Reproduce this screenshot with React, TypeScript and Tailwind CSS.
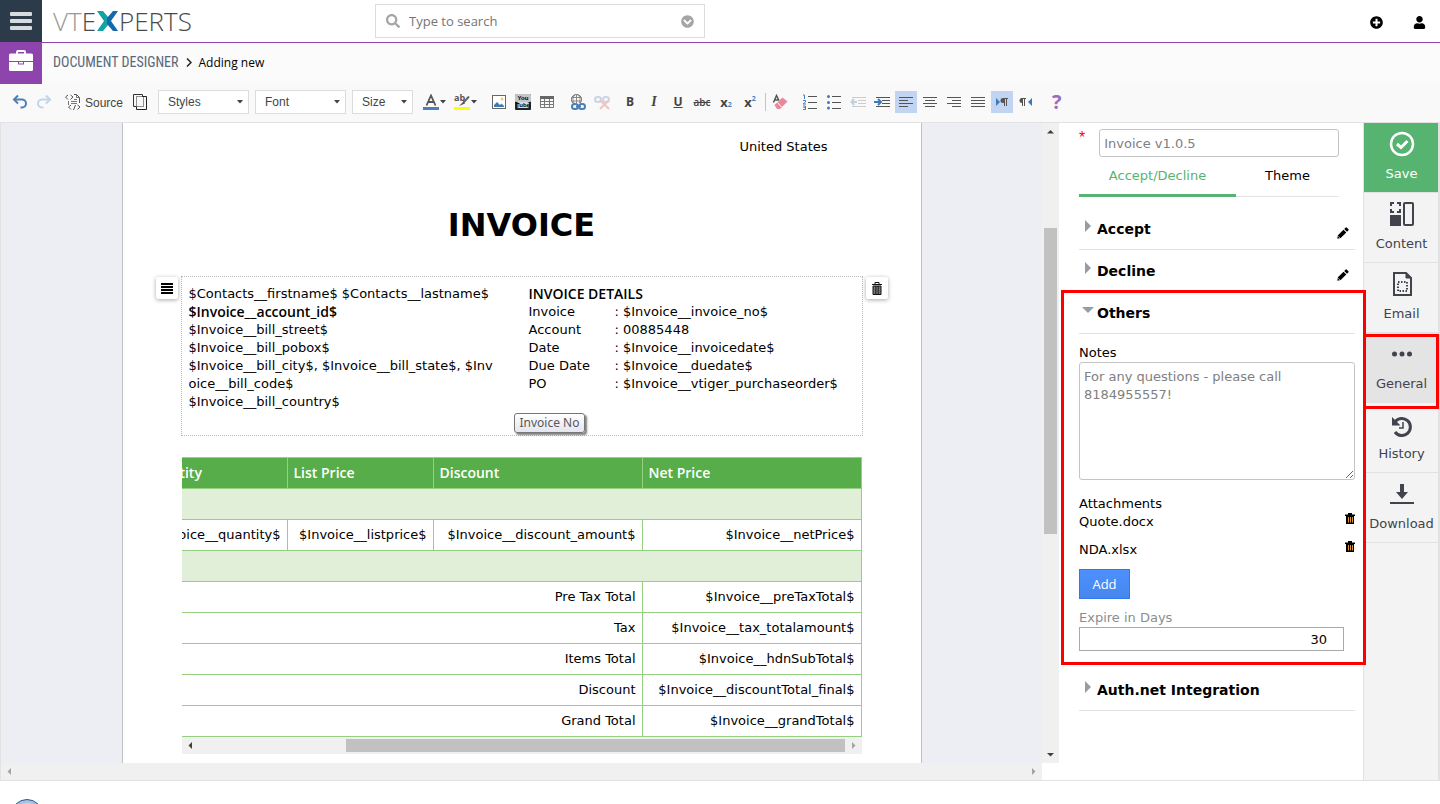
import type { ReactNode } from "react";
import { FaUser, FaSearch, FaPlusCircle, FaChevronCircleDown } from "react-icons/fa";

const fieldText =
  "rounded-[3px] border border-[#c4c4c4] bg-white text-[13px] leading-[18px] text-[#808080]";

/* ---------- toolbar ---------- */

const Caret = () => (
  <svg width="6" height="4" viewBox="0 0 6 4" fill="#444" className="shrink-0">
    <path d="M0 0h6L3 3.5z" />
  </svg>
);

const ToolSelect = ({ label, width }: { label: string; width: string }) => (
  <div className={`relative h-6 ${width}`}>
    <select
      aria-label={label}
      className="h-full w-full appearance-none border border-[#dcdcdc] bg-white pl-[9px] font-['Liberation_Sans'] text-[12px] text-[#444]"
    >
      <option>{label}</option>
    </select>
    <span className="pointer-events-none absolute top-[10px] right-[6px]">
      <Caret />
    </span>
  </div>
);

const Tool = ({
  label,
  active,
  children,
}: {
  label: string;
  active?: boolean;
  children: ReactNode;
}) => (
  <button
    aria-label={label}
    className={`flex h-[22px] w-[22px] items-center justify-center ${active ? "bg-[#c1d4f2]" : ""}`}
  >
    {children}
  </button>
);

const Svg = ({ children }: { children: ReactNode }) => (
  <svg width="16" height="16" viewBox="0 0 16 16" fill="none" className="shrink-0">
    {children}
  </svg>
);

const Lines = ({ rows }: { rows: [number, number][] }) => (
  <Svg>
    {rows.map(([x, w], i) => (
      <rect key={i} x={x} y={3 + i * 3} width={w} height="1" fill="#555" />
    ))}
  </Svg>
);

const Toolbar = () => (
  <div className="flex h-[38px] items-center bg-[#f9f9f9] pb-[2px] pl-[9px]">
    <div className="flex items-center gap-[2px]">
      <Tool label="Undo">
        <Svg>
          <path d="M2 5.5h8a3.5 3.5 0 0 1 0 8H8.5" stroke="#4a7fb8" strokeWidth="2" />
          <path d="M6 1.500L2 5.500l4 4" stroke="#4a7fb8" strokeWidth="2" />
        </Svg>
      </Tool>
      <Tool label="Redo">
        <Svg>
          <path d="M14 5.500H6a3.5 3.5 0 0 0 0 8h1.5" stroke="#c3d4e6" strokeWidth="2" />
          <path d="M10 1.500l4 4-4 4" stroke="#c3d4e6" strokeWidth="2" />
        </Svg>
      </Tool>
    </div>
    <button className="ml-[10px] flex items-center gap-1 font-['Liberation_Sans'] text-[12px] text-[#444]">
      <Svg>
        <path d="M3 1L.5 3 3 5.500M5.500 1L8 3 5.500 5.500M9 .5h2.500l3 3V9" stroke="#555" />
        <path d="M11.500.5v3h3M3.500 7v4M6 7.500h6M9 5.500h3M6 9.500h6" stroke="#777" />
        <path d="M6 11l-2.500 2L6 15.500M12.500 11l2.500 2-2.500 2.500M10.500 11l-2 5" stroke="#555" />
      </Svg>
      <span className="pt-px">Source</span>
    </button>
    <button aria-label="Show blocks" className="ml-[9px]">
      <Svg>
        <path d="M5 .5H1.500v12H4.500M4 .5h6.500V3" stroke="#333" />
        <path d="M11 2.500h3.500v13h-10V13" stroke="#222" />
        <path d="M4.500 2.500h7v10h-7z" stroke="#222" strokeDasharray="1 1" />
      </Svg>
    </button>
    <div className="ml-[10px] flex gap-[6px]">
      <ToolSelect label="Styles" width="w-[91px]" />
      <ToolSelect label="Font" width="w-[91px]" />
      <ToolSelect label="Size" width="w-[61px]" />
    </div>
    <div className="ml-[10px] flex items-center gap-2">
      <button aria-label="Text color" className="flex items-center gap-px">
        <Svg>
          <path d="M3.500 11.500L8 1.500 12.500 11.500M5 8h6" stroke="#555" strokeWidth="1.800" />
          <rect y="13" width="16" height="3" fill="#4a7fb8" />
        </Svg>
        <Caret />
      </button>
      <button aria-label="Background color" className="flex items-center gap-px">
        <svg width="16" height="18" viewBox="0 -1 16 18" fill="none">
          <text x="0" y="7" fontSize="9" fontWeight="bold" fontFamily="Open Sans" fill="#555">
            ab
          </text>
          <path d="M15 2.500L9.500 8.500" stroke="#666" strokeWidth="2" />
          <path d="M9.500 7.500l1.500 2-6 2.500z" fill="#555" />
          <rect y="13" width="16" height="3" fill="#ff0" />
        </svg>
        <Caret />
      </button>
    </div>
    <div className="ml-[11px] flex items-center gap-[2px]">
      <Tool label="Image">
        <Svg>
          <rect x="1.500" y="1.500" width="13" height="13" fill="#fff" stroke="#666" />
          <circle cx="11" cy="5" r="1.500" fill="#f0c878" />
          <path d="M3 13V11l3-3 3 3 1.500-1.500L13 12v1z" fill="#3f7ab8" />
        </Svg>
      </Tool>
      <Tool label="Embed YouTube video">
        <svg width="16" height="16" viewBox="0 0 16 16">
          <rect width="16" height="16" rx="1" fill="#222" />
          <rect width="16" height="8" rx="1" fill="#c4c4c4" />
          <rect x="2" y="8" width="12" height="6" rx="2" fill="#ddd" />
          <g fontFamily="Liberation Sans" fontSize="6" fontWeight="bold" textAnchor="middle">
            <text x="8" y="6">You</text>
            <text x="8" y="13">Tube</text>
          </g>
        </svg>
      </Tool>
      <Tool label="Table">
        <Svg>
          <path d="M1.500 2.500h13v11h-13zM1.500 7.500h13M1.500 10.500h13M5.500 5v9M10.500 5v9" stroke="#777" />
          <rect x="1" y="2" width="14" height="3" fill="#666" />
        </Svg>
      </Tool>
    </div>
    <div className="ml-[9px] flex items-center gap-[2px]">
      <Tool label="Link">
        <Svg>
          <circle cx="6.500" cy="5.500" r="5" stroke="#666" />
          <path d="M6.500.5v9M1.500 3.500h10M1.500 7h10M4.500 1c-2 3-2 6 0 9M8.500 1c2 3 2 6 0 9" stroke="#888" />
          <rect x="1" y="9" width="15" height="7" rx="3" fill="#f9f9f9" />
          <rect x="2" y="10" width="6" height="5" rx="2.500" stroke="#4a7fb8" strokeWidth="2" />
          <rect x="9" y="10" width="6" height="5" rx="2.500" stroke="#4a7fb8" strokeWidth="2" />
          <path d="M6 12.500h5" stroke="#4a7fb8" strokeWidth="2" />
        </Svg>
      </Tool>
      <Tool label="Unlink">
        <Svg>
          <rect x="1" y="3" width="6" height="5" rx="2.500" stroke="#c8d6e6" strokeWidth="2" />
          <rect x="9" y="3" width="6" height="5" rx="2.500" stroke="#c8d6e6" strokeWidth="2" />
          <path d="M6 6l9 9M15 6l-9 9" stroke="#f3c3bd" strokeWidth="2" />
        </Svg>
      </Tool>
    </div>
    <div className="ml-[6px] flex items-center gap-[2px] font-['Open_Sans'] text-[12px] leading-4 text-[#444]">
      <Tool label="Bold"><b>B</b></Tool>
      <Tool label="Italic">
        <i className="font-['Liberation_Serif'] text-[14px] font-bold">I</i>
      </Tool>
      <Tool label="Underline"><b className="underline">U</b></Tool>
      <Tool label="Strikethrough">
        <span className="text-[10px] font-semibold line-through">abc</span>
      </Tool>
      <Tool label="Subscript">
        <b className="text-[13px]">x</b>
        <b className="self-end text-[7px] text-[#4a7fb8]">2</b>
      </Tool>
      <Tool label="Superscript">
        <b className="text-[13px]">x</b>
        <b className="self-start text-[7px] text-[#4a7fb8]">2</b>
      </Tool>
    </div>
    <span className="ml-1 h-[18px] w-px bg-[#c4c4c4]" />
    <div className="ml-[3px] flex">
      <Tool label="Remove format">
        <Svg>
          <path d="M1.500 8.500L4.500 1.500 7 6.500M2.500 6h4" stroke="#555" strokeWidth="1.500" />
          <path d="M2.500 11l8-7.500 5 4-7.500 7.500H5z" fill="#e8899b" />
          <path d="M5.500 8.500l4 4.500" stroke="#fff" />
        </Svg>
      </Tool>
    </div>
    <div className="ml-2 flex items-center gap-[2px]">
      <Tool label="Numbered list">
        <Svg>
          <path d="M6 2.500h9M6 8.500h9M6 14.500h9" stroke="#555" />
          <path d="M1 1h1.500v4M1 6.500h2.500V8L1 10h3M1 12h2.500v3.500H1M1.500 13.500h2" stroke="#4a7fb8" />
        </Svg>
      </Tool>
      <Tool label="Bulleted list">
        <Svg>
          <path d="M6 2.500h9M6 8.500h9M6 14.500h9" stroke="#555" />
          <g fill="#3f7ab8">
            <circle cx="2.500" cy="2.500" r="1.500" />
            <circle cx="2.500" cy="8.500" r="1.500" />
            <circle cx="2.500" cy="14" r="1.500" />
          </g>
        </Svg>
      </Tool>
      <Tool label="Decrease indent">
        <Svg>
          <path d="M2 3.500h14M8 6.500h8M8 9.500h8M2 12.500h14" stroke="#ccc" />
          <path d="M4 5L1.500 8 4 11M1.500 8H7" stroke="#bdd2e6" strokeWidth="2" />
        </Svg>
      </Tool>
      <Tool label="Increase indent">
        <Svg>
          <path d="M2 3.500h14M8 6.500h8M8 9.500h8M2 12.500h14" stroke="#555" />
          <path d="M4 5l3 3-3 3M0 8h6" stroke="#3f7ab8" strokeWidth="2" />
        </Svg>
      </Tool>
      <Tool label="Align left" active>
        <Lines rows={[[1, 14], [1, 9], [1, 14], [1, 9]]} />
      </Tool>
      <Tool label="Center">
        <Lines rows={[[1, 14], [3, 10], [1, 14], [3, 10]]} />
      </Tool>
      <Tool label="Align right">
        <Lines rows={[[1, 14], [6, 9], [1, 14], [6, 9]]} />
      </Tool>
      <Tool label="Justify">
        <Lines rows={[[1, 14], [1, 14], [1, 14], [1, 14]]} />
      </Tool>
      <Tool label="Left to right" active>
        <Svg>
          <path d="M2 4l4 4-4 4z" fill="#3f7ab8" />
          <path d="M12.500 4v8M10.500 4v8M14 4.500H9" stroke="#555" />
          <path d="M11 4H9a2.500 2.500 0 0 0 0 5h2z" fill="#555" />
        </Svg>
      </Tool>
      <Tool label="Right to left">
        <Svg>
          <path d="M14 4l-4 4 4 4z" fill="#3f7ab8" />
          <path d="M6.500 4v8M4.500 4v8M8 4.500H3" stroke="#555" />
          <path d="M5 4H4a2.500 2.500 0 0 0 0 5h1z" fill="#555" />
        </Svg>
      </Tool>
    </div>
    <button className="ml-[15px] font-['Open_Sans'] text-[20px] leading-5 font-bold text-[#9b6cc0]">
      ?
    </button>
  </div>
);

/* ---------- header ---------- */

const Logo = () => (
  <div className="flex items-center font-['Open_Sans'] text-[26px] leading-[42px] text-[#4a4a4a]">
    <span className="font-light text-[#999]">VT</span>
    <span className="font-light">E</span>
    <svg width="23" height="20" viewBox="0 0 23 20">
      <path d="M1 0h6l5 6v8l-5 6H1l7-10z" fill="#14a3a3" />
      <path d="M22 0h-5l-6 7v6l6 7h5l-7-10z" fill="#1668ae" />
    </svg>
    <span className="font-light">PERTS</span>
  </div>
);

const Header = () => (
  <header className="flex">
    <div className="w-[42px] shrink-0">
      <button aria-label="Menu" className="flex h-[42px] w-full items-center justify-center bg-[#2c3b49]">
        <svg width="22" height="18" viewBox="0 0 22 18" fill="#d9dcdf">
          <rect width="22" height="4" rx="1" />
          <rect y="7" width="22" height="4" rx="1" />
          <rect y="14" width="22" height="4" rx="1" />
        </svg>
      </button>
      <div className="flex h-[42px] justify-center bg-[#8e44ad] pt-2">
        <svg width="24" height="21" viewBox="0 0 24 21" fill="#fff">
          <path d="M7 4V2a2 2 0 0 1 2-2h6a2 2 0 0 1 2 2v2h-2V2H9v2z" />
          <path d="M1.500 3.500h21A1.500 1.500 0 0 1 24 5v6H0V5a1.500 1.500 0 0 1 1.500-1.500z" />
          <path d="M0 12h9v2.500h6V12h9v7.500a1.500 1.500 0 0 1-1.500 1.500h-21A1.500 1.500 0 0 1 0 19.500z" />
          <path d="M10 12h4v1.500h-4z" />
        </svg>
      </div>
    </div>
    <div className="flex-1">
      <div className="flex h-[43px] items-center border-b border-[#8e44ad] pl-[11px]">
        <div className="w-[322px]">
          <Logo />
        </div>
        <label className="flex h-[34px] w-[330px] items-center border border-[#dcdcdc] px-[10px]">
          <FaSearch className="text-[14px] text-[#a5a5a5]" />
          <input
            placeholder="Type to search"
            aria-label="Type to search"
            className="ml-[9px] min-w-0 flex-1 pt-[2px] font-['Open_Sans'] text-[13px] outline-none placeholder:text-[#757575]"
          />
          <FaChevronCircleDown className="text-[13px] text-[#a5a5a5]" />
        </label>
        <div className="ml-auto flex gap-[30px] pt-[3px] pr-[14px] text-[13px] text-black">
          <button aria-label="Quick create"><FaPlusCircle /></button>
          <button aria-label="Account"><FaUser /></button>
        </div>
      </div>
      <nav className="flex h-[41px] items-center gap-[7px] bg-[#fbfbfb] pb-[2px] pl-[11px] font-['Open_Sans'] text-[12px] text-black">
        <a href="#" className="font-['Roboto_Condensed','Liberation_Sans_Narrow'] text-[14px] text-[#596779]">
          DOCUMENT DESIGNER
        </a>
        <svg width="6" height="9" viewBox="0 0 6 9" fill="none" stroke="#222" strokeWidth="1.500">
          <path d="M1 .5l4 4-4 4" />
        </svg>
        <span>Adding new</span>
      </nav>
    </div>
  </header>
);

/* ---------- document ---------- */

const Arrow = ({ d, fill = "#404040" }: { d: string; fill?: string }) => (
  <svg width="17" height="17" viewBox="0 0 17 17" fill={fill} className="shrink-0">
    <path d={d} />
  </svg>
);

const up = "M5 10.500h7L8.500 7z";
const down = "M5 7h7l-3.500 3.500z";
const left = "M10 5v7L6.500 8.500z";
const right = "M7 5v7l3.500-3.500z";

const address = [
  "$Invoice__bill_street$",
  "$Invoice__bill_pobox$",
  "$Invoice__bill_city$, $Invoice__bill_state$, $Invoice__bill_code$",
  "$Invoice__bill_country$",
];

const details = [
  ["Invoice", "$Invoice__invoice_no$"],
  ["Account", "00885448"],
  ["Date", "$Invoice__invoicedate$"],
  ["Due Date", "$Invoice__duedate$"],
  ["PO", "$Invoice__vtiger_purchaseorder$"],
];

const totals = [
  ["Pre Tax Total", "$Invoice__preTaxTotal$"],
  ["Tax", "$Invoice__tax_totalamount$"],
  ["Items Total", "$Invoice__hdnSubTotal$"],
  ["Discount", "$Invoice__discountTotal_final$"],
  ["Grand Total", "$Invoice__grandTotal$"],
];

const blockButton =
  "absolute top-0 flex h-[22px] w-[22px] items-center justify-center rounded-[2px] bg-white shadow-[0_1px_4px_rgba(0,0,0,0.35)]";

const AddressBlock = () => (
  <div className="relative mt-[30px] flex h-[160px] border border-dotted border-[#bbb] pt-[8px] pl-[7px] leading-[18px]">
    <button aria-label="Move block" className={`${blockButton} -left-[26px]`}>
      <svg width="12" height="11" viewBox="0 0 12 11" fill="#000">
        <path d="M0 0h12v2H0zM0 3h12v2H0zM0 6h12v2H0zM0 9h12v2H0z" />
      </svg>
    </button>
    <button aria-label="Delete block" className={`${blockButton} -right-[26px]`}>
      <svg width="12" height="13" viewBox="0 0 12 13" fill="none" stroke="#111">
        <path d="M1 2.500h10M4 2V.5h4V2" />
        <path d="M2 4h8v8.500H2z" fill="#777" />
        <path d="M4.500 4v8M6 4v8M7.500 4v8" strokeWidth=".6" />
      </svg>
    </button>
    <div className="w-[340px] pr-[32px] break-all">
      <p>$Contacts__firstname$ $Contacts__lastname$</p>
      <p className="font-['Open_Sans'] text-[14px] font-semibold">$Invoice__account_id$</p>
      {address.map((line) => (
        <p key={line}>{line}</p>
      ))}
    </div>
    <div>
      <p className="font-['Open_Sans'] text-[14px] font-semibold">INVOICE DETAILS</p>
      {details.map(([name, value]) => (
        <p key={name} className="flex">
          <span className="w-[86px]">{name}</span>: {value}
        </p>
      ))}
    </div>
    <div className="absolute top-[136px] left-[332px] rounded-[3px] border border-[#767676] bg-linear-to-b from-white to-[#e4e5f0] px-[5px] font-['Noto_Sans'] text-[12px] leading-[18px] text-[#575757] shadow-[2px_2px_2px_rgba(0,0,0,0.5)]">
      Invoice No
    </div>
  </div>
);

const cell = "h-[31px] border border-[#93d07f] px-[6px]";

const Items = () => (
  <div className="mt-[21px] ml-px flex w-[680px] justify-end overflow-hidden">
    <table className="w-[725px] shrink-0 table-fixed border-collapse text-right">
      <colgroup>
        <col className="w-[151px]" />
        <col className="w-[146px]" />
        <col className="w-[209px]" />
        <col className="w-[219px]" />
      </colgroup>
      <thead className="bg-[#57ad4a] text-left font-['Open_Sans'] text-[14px] leading-[18px] text-white">
        <tr>
          {["Quantity", "List Price", "Discount", "Net Price"].map((name) => (
            <th key={name} className={`${cell} font-semibold`}>
              {name}
            </th>
          ))}
        </tr>
      </thead>
      <tbody>
        <tr className="bg-[#e1efd8]">
          <td colSpan={4} className={cell} />
        </tr>
        <tr>
          <td className={cell}>$Invoice__quantity$</td>
          <td className={cell}>$Invoice__listprice$</td>
          <td className={cell}>$Invoice__discount_amount$</td>
          <td className={cell}>$Invoice__netPrice$</td>
        </tr>
        <tr className="bg-[#e1efd8]">
          <td colSpan={4} className={cell} />
        </tr>
        {totals.map(([name, value]) => (
          <tr key={name}>
            <td colSpan={3} className={cell}>{name}</td>
            <td className={cell}>{value}</td>
          </tr>
        ))}
      </tbody>
    </table>
  </div>
);

const Editor = () => (
  <main className="flex min-w-0 flex-1 flex-col">
    <div className="flex">
      <div className="min-w-0 flex-1 overflow-hidden bg-[#edeef3]">
        <div className="mx-auto w-[800px] border-x border-[#c0c0c4] bg-white px-[58px] pb-[9px]">
          <p className="pt-[15px] pr-[35px] text-right leading-[18px]">United States</p>
          <h1 className="mt-[48px] text-center text-[32px] leading-[42px] font-bold">INVOICE</h1>
          <AddressBlock />
          <Items />
          <div className="ml-px flex h-[17px] w-[680px] items-center bg-[#f0f0f0]">
            <Arrow d={left} />
            <div className="ml-auto h-[13px] w-[499px] bg-[#c1c1c1]" />
            <Arrow d={right} fill="#a3a3a3" />
          </div>
        </div>
      </div>
      <div className="flex w-[17px] flex-col items-center bg-[#f0f0f0]">
        <Arrow d={up} />
        <div className="mt-[88px] h-[306px] w-[13px] bg-[#c1c1c1]" />
        <div className="mt-auto flex">
          <Arrow d={down} />
        </div>
      </div>
    </div>
    <div className="mr-[17px] flex h-[17px] justify-between bg-[#f0f0f0]">
      <Arrow d={left} fill="#a3a3a3" />
      <Arrow d={right} fill="#a3a3a3" />
    </div>
  </main>
);

/* ---------- side panel ---------- */

const Pencil = () => (
  <svg width="12" height="12" viewBox="0 0 12 12">
    <path d="M8.500.7a1 1 0 0 1 1.400 0l1.400 1.400a1 1 0 0 1 0 1.400L10 4.800 7.200 2zM6.500 2.700l2.800 2.800-5.600 5.600L.3 11.700.9 8.300z" />
    <path d="M1.200 9.300l1.500 1.500" stroke="#fff" strokeWidth=".8" />
  </svg>
);

const SmallTrash = () => (
  <svg width="10" height="11" viewBox="0 0 10 11">
    <path d="M0 1.500h3V0h4v1.500h3v1.500H0zM1 3h8v8H1z" />
    <path d="M3.500 4v5.500M5.500 4v5.500M7.500 4v5.500" stroke="#d9962e" />
  </svg>
);

const Section = ({ title, open, edit }: { title: string; open?: boolean; edit?: boolean }) => (
  <div className="flex h-[42px] items-center border-b border-[#e2e2e2]">
    <svg width="18" height="16" viewBox="0 0 18 16" fill="#949ca5" className="mb-px">
      <path d={open ? "M3 3h12L9 9z" : "M6 0v12l6-6z"} />
    </svg>
    <h2 className="text-[14px] font-bold">{title}</h2>
    {edit && (
      <button aria-label={`Edit ${title}`} className="mt-2 mr-[6px] ml-auto">
        <Pencil />
      </button>
    )}
  </div>
);

const SidePanel = () => (
  <aside className="w-[304px] shrink-0 bg-white pt-[6px] pr-2 pl-5 leading-[18px]">
    <div className="flex gap-[14px]">
      <span className="font-['Liberation_Sans'] text-[16px] text-[#f00]">*</span>
      <input
        aria-label="Template name"
        defaultValue="Invoice v1.0.5"
        className={`h-7 w-[240px] px-1 ${fieldText}`}
      />
    </div>
    <div className="flex h-10 w-[260px] border-b border-[#e2e2e2]">
      <button className="-mb-px w-[157px] border-b-3 border-[#57b370] text-[#57b370]">
        Accept/Decline
      </button>
      <button className="flex-1 pt-px pb-[3px]">Theme</button>
    </div>
    <div className="pt-[11px]">
      <Section title="Accept" edit />
      <Section title="Decline" edit />
    </div>
    <div className="relative">
      <div className="pointer-events-none absolute -top-[2px] -right-[11px] -bottom-[14px] -left-[18px] z-10 border-3 border-[#f00]" />
      <Section title="Others" open />
      <label className="block pt-[10px]">
        Notes
        <textarea
          defaultValue="For any questions - please call 8184955557!"
          className={`block h-[118px] w-full px-1 py-[5px] ${fieldText}`}
        />
      </label>
      <h3 className="mt-[15px]">Attachments</h3>
      {["Quote.docx", "NDA.xlsx"].map((file) => (
        <div key={file} className="flex items-start justify-between pb-[10px]">
          <span>{file}</span>
          <button aria-label={`Remove ${file}`}>
            <SmallTrash />
          </button>
        </div>
      ))}
      <button className="block h-[30px] w-[51px] border border-[#3079ed] bg-linear-to-b from-[#4d90fe] to-[#4787ed] font-['Open_Sans'] text-white">
        Add
      </button>
      <label className="mt-[10px] block text-[#8d8d8d]">
        Expire in Days
        <input
          defaultValue="30"
          className="block h-6 w-[265px] border border-[#a9a9a9] pr-4 text-right text-black"
        />
      </label>
    </div>
    <div className="pt-[18px]">
      <Section title="Auth.net Integration" />
    </div>
  </aside>
);

/* ---------- action rail ---------- */

const actions: { name: string; icon: ReactNode; style?: string }[] = [
  {
    name: "Save",
    style: "bg-[#57b370] text-white",
    icon: (
      <>
        <circle cx="13" cy="13" r="11" strokeWidth="2.500" />
        <path d="M8 13l4 3.500 6.500-6.500" strokeWidth="3" />
      </>
    ),
  },
  {
    name: "Content",
    icon: (
      <>
        <path d="M2 5V2h3M8 2h3v3M11 8v3H8M5 11H2V8" strokeWidth="2" />
        <rect x="1" y="14" width="11" height="11" fill="currentColor" stroke="none" />
        <rect x="15" y="2" width="9" height="22" rx="1" strokeWidth="2" />
      </>
    ),
  },
  {
    name: "Email",
    icon: (
      <>
        <path d="M5 2h12l5 5v17H5z" strokeWidth="2" />
        <path d="M17 2v5h5z" fill="currentColor" />
        <rect x="9" y="11" width="9" height="9" strokeWidth="2" strokeDasharray="1.500 1.500" />
      </>
    ),
  },
  {
    name: "General",
    style: "bg-[#e4e4e4]",
    icon: (
      <g fill="currentColor" stroke="none">
        <circle cx="5.500" cy="13" r="2.500" />
        <circle cx="13" cy="13" r="2.500" />
        <circle cx="20.500" cy="13" r="2.500" />
      </g>
    ),
  },
  {
    name: "History",
    icon: (
      <>
        <path d="M6 11a8.500 8.500 0 1 1 0 10" strokeWidth="3" />
        <path d="M3 6v8.500h8.500z" fill="currentColor" stroke="none" />
        <path d="M14 11v6h-4" strokeWidth="1.500" />
      </>
    ),
  },
  {
    name: "Download",
    icon: (
      <>
        <path d="M1 22h24" strokeWidth="2" />
        <path d="M11 3h4v8h4l-6 7-6-7h4z" fill="currentColor" stroke="none" />
      </>
    ),
  },
];

const Rail = () => (
  <nav className="w-[77px] shrink-0 border-x border-r-2 border-[#e2e2e2] bg-[#f3f3f3] text-[#41434d]">
    {actions.map(({ name, icon, style }) => (
      <button
        key={name}
        className={`relative flex h-[70px] w-full flex-col items-center border-b border-[#e2e2e2] pt-2 pl-px leading-[18px] ${style ?? ""}`}
      >
        <svg width="26" height="26" viewBox="0 0 26 26" fill="none" stroke="currentColor">
          {icon}
        </svg>
        <span className="mt-[8px]">{name}</span>
        {name === "General" && (
          <span className="absolute top-px -right-px -bottom-[7px] -left-px z-20 border-3 border-[#f00]" />
        )}
      </button>
    ))}
  </nav>
);

export default function App() {
  return (
    <div className="min-h-screen overflow-hidden bg-white font-['DejaVu_Sans',sans-serif] text-[13px] text-black">
      <Header />
      <Toolbar />
      <div className="flex border-y border-l border-[#e2e2e2]">
        <Editor />
        <SidePanel />
        <Rail />
      </div>
      <footer className="h-[23px] overflow-hidden pt-[18px] pl-[11px]">
        <svg width="32" height="32" viewBox="0 0 32 32">
          <circle cx="16" cy="16" r="15.500" fill="#a9c0d6" stroke="#2a5a96" />
          <circle cx="16" cy="17" r="13.500" fill="#c3d1df" />
        </svg>
      </footer>
    </div>
  );
}
